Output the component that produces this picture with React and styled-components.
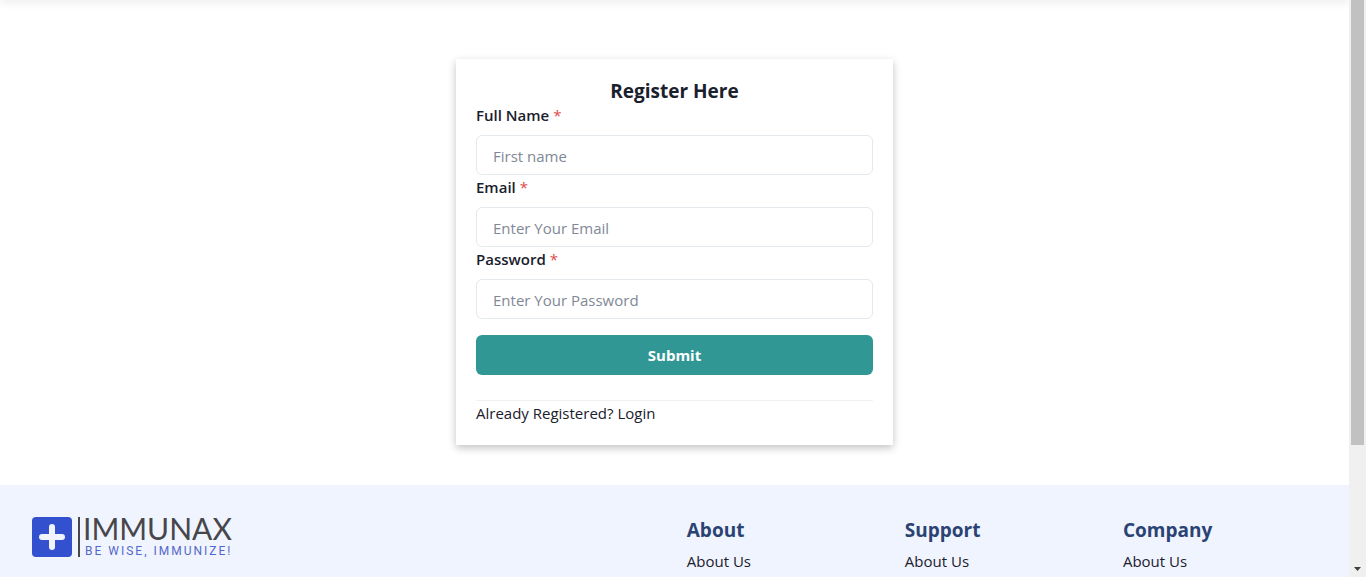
import React from "react";
import styled, { createGlobalStyle } from "styled-components";

const GlobalStyle = createGlobalStyle`
  *, *::before, *::after { box-sizing: border-box; }
  body {
    margin: 0;
    background: #fff;
    color: #1a202c;
    font-family: "Segoe UI", "Open Sans", "Noto Sans", sans-serif;
    font-size: 15px;
    line-height: 24px;
  }
  h1, h2, p, ul { margin: 0; padding: 0; }
  a { color: inherit; text-decoration: none; }
`;

const Shell = styled.div`
  display: flex;
  height: 100vh;
  overflow: hidden;
`;

const Page = styled.div`
  flex: 1;
  min-width: 0;
  display: flex;
  flex-direction: column;
`;

const NavEdge = styled.header`
  height: 0;
  box-shadow: 0 0 8px 1px rgba(0, 0, 0, 0.24);
`;

const Main = styled.main`
  display: flex;
  justify-content: center;
  padding: 59px 16px 40px;
`;

const Card = styled.form`
  width: 100%;
  max-width: 437px;
  padding: 20px;
  background: #fff;
  box-shadow: 0 3px 8px rgba(0, 0, 0, 0.24);
`;

const Title = styled.h1`
  font-size: 19px;
  line-height: 24px;
  font-weight: 700;
  text-align: center;
`;

const Label = styled.label`
  display: block;
  margin-bottom: 8px;
  font-weight: 600;
`;

const Required = styled.span`
  margin-left: 4px;
  color: #dc4a4a;
  font-weight: 400;
`;

const Input = styled.input`
  display: block;
  width: 100%;
  height: 40px;
  padding: 2px 16px 0;
  border: 1px solid #e4e9ed;
  border-radius: 6px;
  background: #fff;
  color: inherit;
  font: inherit;
  &::placeholder { color: #7f8896; opacity: 1; }
`;

const SubmitButton = styled.button`
  display: block;
  width: 100%;
  height: 40px;
  margin: 16px 0 25px;
  border: 0;
  border-radius: 6px;
  background: #319795;
  color: #fff;
  font: inherit;
  font-weight: 700;
  cursor: pointer;
`;

const LoginNote = styled.p`
  border-top: 1px solid #f0f2f4;
`;

const Footer = styled.footer`
  flex: 1 0 auto;
  display: grid;
  grid-template-columns: 13fr 4fr 4fr 4fr;
  column-gap: 24px;
  padding: 32px 32px 0;
  background: #f0f4ff;
`;

const Logo = styled.svg`
  display: block;
  width: 204px;
  height: 40px;
  overflow: visible;
`;

const ColumnTitle = styled.h2`
  margin-bottom: 6px;
  color: #2a4373;
  font-size: 19px;
  line-height: 26px;
  font-weight: 700;
`;

const LinkList = styled.ul`
  list-style: none;
`;

const ScrollTrack = styled.div`
  display: flex;
  flex-direction: column;
  justify-content: space-between;
  align-items: center;
  width: 17px;
  padding-bottom: 6px;
  background: #f0f0f0;
`;

const ScrollThumb = styled.div`
  width: 13px;
  height: 78%;
  background: #c1c1c1;
`;

const ScrollArrow = styled.svg`
  width: 7px;
  height: 4px;
`;

const fields = [
  { id: "name", label: "Full Name", type: "text", placeholder: "First name" },
  { id: "email", label: "Email", type: "email", placeholder: "Enter Your Email" },
  { id: "password", label: "Password", type: "password", placeholder: "Enter Your Password" },
];

function Field({ id, label, type, placeholder }) {
  return (
    <div>
      <Label htmlFor={id}>
        {label}
        <Required>*</Required>
      </Label>
      <Input id={id} type={type} placeholder={placeholder} />
    </div>
  );
}

function Brand() {
  return (
    <Logo viewBox="0 0 204 40" role="img" aria-label="Immunax">
      <rect width="40" height="40" rx="4" fill="#3350cf" />
      <path d="M20 10v20M10 20h20" stroke="#f0f4ff" strokeWidth="6" strokeLinecap="round" />
      <path d="M47 0v40" stroke="#47474b" strokeWidth="2" />
      <text x="51" y="23" fill="#47474b" fontFamily="Lato" fontSize="30">IMMUNAX</text>
      <text x="53" y="38" fill="#5468c9" fontFamily="Roboto" fontSize="12" letterSpacing="2">BE WISE, IMMUNIZE!</text>
    </Logo>
  );
}

export default function App() {
  return (
    <>
      <GlobalStyle />
      <Shell>
        <Page>
          <NavEdge />
          <Main>
            <Card onSubmit={(e) => e.preventDefault()}>
              <Title>Register Here</Title>
              {fields.map((f) => (
                <Field key={f.id} {...f} />
              ))}
              <SubmitButton type="submit">Submit</SubmitButton>
              <LoginNote>
                Already Registered? <a href="#login">Login</a>
              </LoginNote>
            </Card>
          </Main>
          <Footer>
            <Brand />
            {["About", "Support", "Company"].map((title) => (
              <nav key={title} aria-label={title}>
                <ColumnTitle>{title}</ColumnTitle>
                <LinkList>
                  <li><a href="#about">About Us</a></li>
                </LinkList>
              </nav>
            ))}
          </Footer>
        </Page>
        <ScrollTrack aria-hidden="true">
          <ScrollThumb />
          <ScrollArrow viewBox="0 0 7 4"><path d="M0 0h7L3.500 4z" fill="#404040" /></ScrollArrow>
        </ScrollTrack>
      </Shell>
    </>
  );
}
